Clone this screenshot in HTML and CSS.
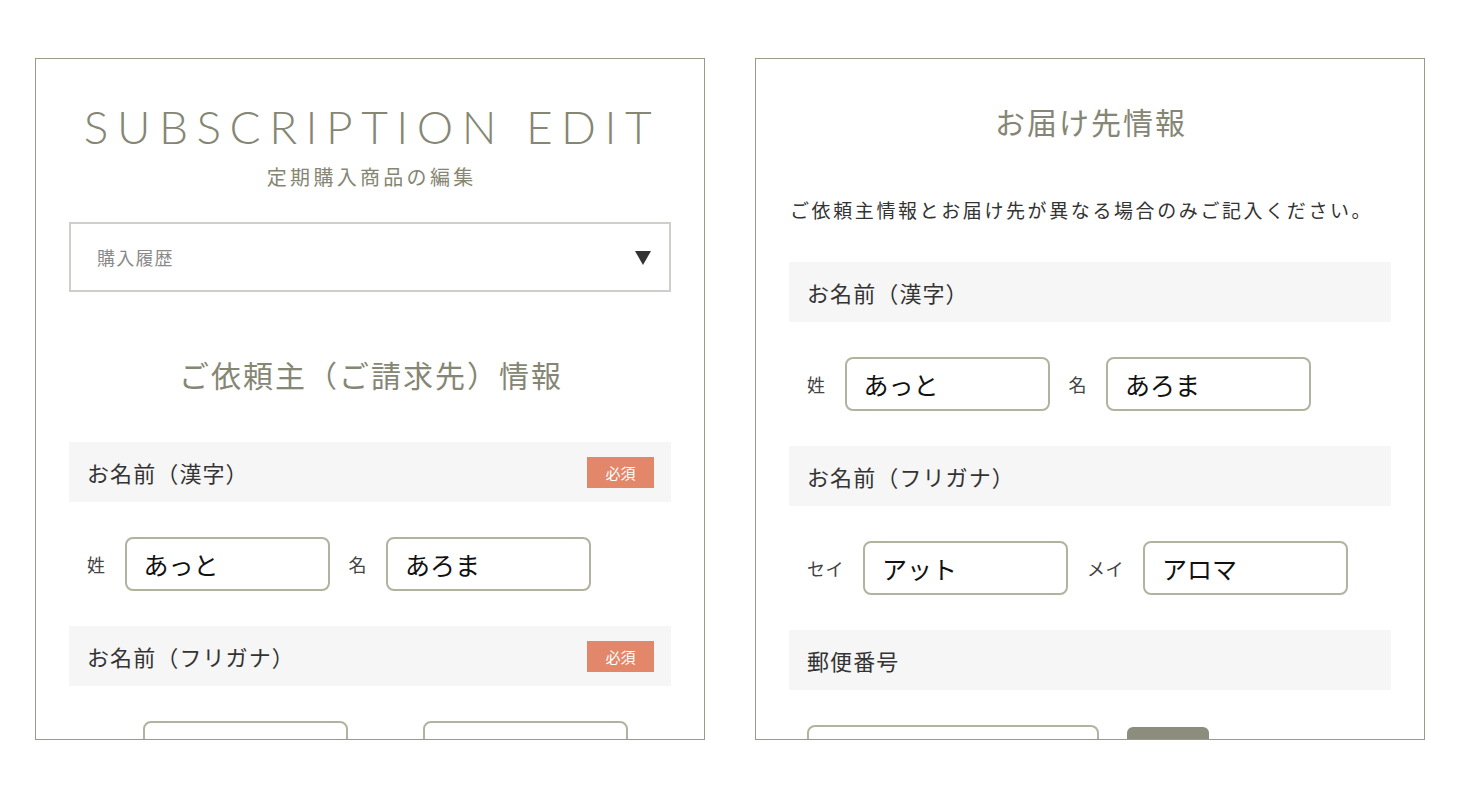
FILE: index.html
```html
<!DOCTYPE html>
<html lang="ja">
<head>
    <meta charset="UTF-8">
    <meta name="viewport" content="width=device-width, initial-scale=1.0">
    <title>Subscription Edit</title>
    <link rel="stylesheet" href="styles.css">
</head>
<body>

    <div class="screens">
        <!-- left: ordering customer -->
        <div class="panel">
            <h1 class="page-title">SUBSCRIPTION EDIT</h1>
            <p class="page-sub">定期購入商品の編集</p>

            <div class="select-box">
                <span>購入履歴</span>
                <svg class="arrow" width="16" height="14" viewBox="0 0 16 14"><polygon points="0,0 16,0 8,14" fill="#333"/></svg>
            </div>

            <h2 class="section-title">ご依頼主（ご請求先）情報</h2>

            <div class="field-head">
                <span>お名前（漢字）</span>
                <span class="required">必須</span>
            </div>
            <div class="field-row">
                <label>姓</label>
                <input type="text" value="あっと">
                <label>名</label>
                <input type="text" value="あろま">
            </div>

            <div class="field-head">
                <span>お名前（フリガナ）</span>
                <span class="required">必須</span>
            </div>
            <div class="field-row">
                <label>セイ</label>
                <input type="text" value="">
                <label>メイ</label>
                <input type="text" value="">
            </div>
        </div>

        <!-- right: delivery address -->
        <div class="panel">
            <h2 class="section-title top">お届け先情報</h2>
            <p class="note">ご依頼主情報とお届け先が異なる場合のみご記入ください。</p>

            <div class="field-head">
                <span>お名前（漢字）</span>
            </div>
            <div class="field-row">
                <label>姓</label>
                <input type="text" value="あっと">
                <label>名</label>
                <input type="text" value="あろま">
            </div>

            <div class="field-head">
                <span>お名前（フリガナ）</span>
            </div>
            <div class="field-row">
                <label>セイ</label>
                <input type="text" value="アット">
                <label>メイ</label>
                <input type="text" value="アロマ">
            </div>

            <div class="field-head">
                <span>郵便番号</span>
            </div>
            <div class="field-row zip">
                <input type="text" class="wide" value="">
                <button type="button" class="zip-btn"></button>
            </div>
        </div>
    </div>

</body>
</html>
```

FILE: styles.css
```css
body {
    font-family: "Noto Sans CJK JP", "Noto Sans", sans-serif;
    background-color: #fff;
    color: #333;
    margin: 0;
    padding: 58px 35px 0;
}
.screens {
    display: flex;
    gap: 50px;
}
.panel {
    width: 602px;
    height: 680px;
    border: 1px solid #9b9b8c;
    padding: 0 33px;
    overflow: hidden;
}
.page-title {
    font-family: Lato, "Noto Sans", sans-serif;
    font-weight: 300;
    font-size: 46px;
    letter-spacing: 8.5px;
    white-space: nowrap;
    color: #868674;
    text-align: center;
    margin: 45px -20px 0;
    line-height: 46px;
    padding-left: 4px;
}
.page-sub {
    text-align: center;
    color: #868674;
    font-size: 20px;
    letter-spacing: 3.3px;
    padding-left: 3.3px;
    margin: 13px 0 0;
    line-height: 28px;
}
.select-box {
    margin-top: 31px;
    height: 66px;
    border: 2px solid #cfcfca;
    display: flex;
    align-items: center;
    justify-content: space-between;
    padding: 0 18px 0 26px;
    font-size: 18px;
    letter-spacing: 1.2px;
    color: #8a8a8a;
}
.arrow {
    margin-top: 2px;
}
.section-title {
    font-weight: 400;
    font-size: 30px;
    letter-spacing: 2px;
    padding-left: 2px;
    color: #868674;
    text-align: center;
    line-height: 40px;
    margin: 62px 0 48px;
}
.section-title.top {
    margin: 42px 0 0;
}
.note {
    font-size: 19px;
    letter-spacing: 2.6px;
    line-height: 28px;
    margin: 55px 0 38px;
    padding-left: 1px;
    white-space: nowrap;
}
.field-head {
    background-color: #f6f6f6;
    height: 60px;
    display: flex;
    align-items: center;
    justify-content: space-between;
    padding: 0 17px 0 18px;
    font-size: 22px;
    letter-spacing: 0.05em;
}
.required {
    background-color: #e2876a;
    color: #fff;
    font-size: 15px;
    letter-spacing: 0;
    width: 67px;
    height: 31px;
    display: flex;
    align-items: center;
    justify-content: center;
}
.field-row {
    display: flex;
    align-items: center;
    gap: 19px;
    padding: 35px 18px;
}
.field-row label {
    font-size: 18px;
    letter-spacing: 0.5px;
    color: #444;
}
.field-row input {
    width: 205px;
    height: 54px;
    box-sizing: border-box;
    border: 2px solid #b3b29e;
    border-radius: 8px;
    padding: 0 17px;
    font-family: "Noto Sans CJK JP", sans-serif;
    font-size: 25px;
    color: #111;
    margin: 0;
}
.field-row.zip {
    gap: 28px;
    align-items: flex-start;
}
.field-row input.wide {
    width: 292px;
}
.zip-btn {
    width: 82px;
    height: 54px;
    margin-top: 2px;
    border: none;
    border-radius: 6px;
    background-color: #8d8d7e;
}
```
